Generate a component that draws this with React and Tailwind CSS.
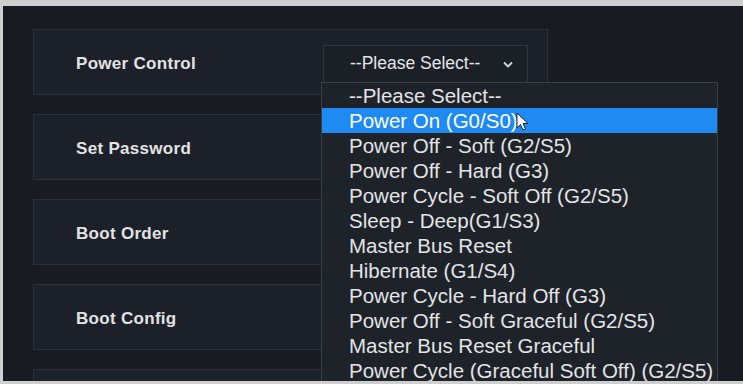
import React from "react";

const options = [
  "--Please Select--",
  "Power On (G0/S0)",
  "Power Off - Soft (G2/S5)",
  "Power Off - Hard (G3)",
  "Power Cycle - Soft Off (G2/S5)",
  "Sleep - Deep(G1/S3)",
  "Master Bus Reset",
  "Hibernate (G1/S4)",
  "Power Cycle - Hard Off (G3)",
  "Power Off - Soft Graceful (G2/S5)",
  "Master Bus Reset Graceful",
  "Power Cycle (Graceful Soft Off) (G2/S5)",
];

function Card({ label, children }) {
  return (
    <div className="w-[515px] h-[66px] shrink-0 border border-[#2c3038] bg-[#1c2028] flex items-center pl-[42px]">
      <div className="w-[247px] shrink-0 mt-[4px] text-[17px] font-bold tracking-[0.3px] text-[#e2e3e5]">
        {label}
      </div>
      {children}
    </div>
  );
}

export default function App() {
  return (
    <div
      className="w-[743px] h-[384px] bg-[#cfcfcf] pt-[6px] pl-[3px] pb-[3px] overflow-hidden"
      style={{ fontFamily: '"Liberation Sans", Arial, sans-serif' }}
    >
      <div className="relative h-full bg-[#181b21] pl-[30px] pt-[23px] flex flex-col gap-[19px] overflow-hidden">
        <Card label="Power Control">
          <div className="w-[205px] h-[38px] mt-[3px] border border-[#31353d] bg-[#1b1f26] flex items-center pl-[26px] pr-[14px] text-[17.5px] text-[#e4e5e7]">
            <span className="flex-1">--Please Select--</span>
            <svg width="10" height="7" viewBox="0 0 10 7" className="mt-[1px]">
              <polyline points="1,1.5 5,5.5 9,1.5" fill="none" stroke="#d8d9db" strokeWidth="1.8" />
            </svg>
          </div>
        </Card>
        <Card label="Set Password" />
        <Card label="Boot Order" />
        <Card label="Boot Config" />
        <Card label="" />

        <div className="absolute left-[318px] top-[76px] w-[397px] border border-[#3b3f47] bg-[#1e2229] text-[20.5px] text-[#e3e4e6]">
          {options.map((o, i) => (
            <div
              key={o}
              className={
                "h-[25px] leading-[25px] pl-[27px] whitespace-nowrap " +
                (i === 1 ? "bg-[#1f8af2] text-white" : "")
              }
            >
              {o}
            </div>
          ))}
          <svg
            className="absolute left-[194px] top-[29px]"
            width="14"
            height="20"
            viewBox="0 0 14 20"
          >
            <path d="M1 1 L1 16 L4.5 12.5 L7 18 L9.5 17 L7 11.5 L12 11.5 Z" fill="#ffffff" stroke="#222" strokeWidth="1" />
          </svg>
        </div>
      </div>
    </div>
  );
}
